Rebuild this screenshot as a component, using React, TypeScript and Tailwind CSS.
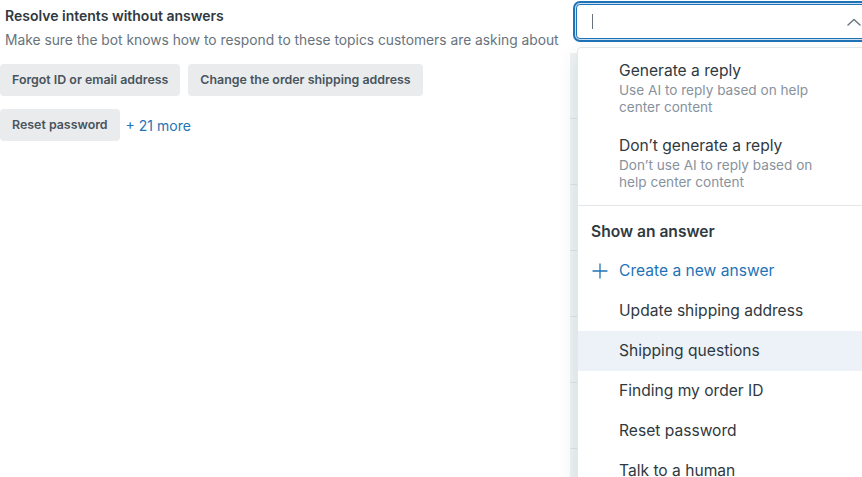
import React from 'react';

const chips = ['Forgot ID or email address', 'Change the order shipping address', 'Reset password'];

const answers = ['Update shipping address', 'Shipping questions', 'Finding my order ID', 'Reset password', 'Talk to a human'];

const ChevronUp = () => (
  <svg width="14" height="8" viewBox="0 0 14 8" fill="none" className="shrink-0">
    <path d="M1 7L7 1.5L13 7" stroke="#68737d" strokeWidth="1.4" strokeLinecap="round" strokeLinejoin="round" />
  </svg>
);

const PlusIcon = () => (
  <svg width="16" height="16" viewBox="0 0 16 16" fill="none" className="shrink-0">
    <path d="M8 1v14M1 8h14" stroke="#1f73b7" strokeWidth="1.3" strokeLinecap="round" />
  </svg>
);

export default function App() {
  return (
    <div className="flex w-[862px] h-[477px] overflow-hidden bg-white font-['Inter',sans-serif]">
      {/* Left: intents */}
      <div className="w-[570px] shrink-0">
        <div className="pl-[5px] pt-[6px] text-[14px] leading-[20px] font-semibold text-[#2f3941]">
          Resolve intents without answers
        </div>
        <div className="pl-[5px] pt-[4px] text-[13.8px] leading-[20px] text-[#68737d]">
          Make sure the bot knows how to respond to these topics customers are asking about
        </div>
        <div className="mt-[14px] flex flex-wrap items-center gap-x-[8px] gap-y-[13px] w-[440px]">
          {chips.map((c) => (
            <div
              key={c}
              className="h-[32px] px-[12px] flex items-center rounded-[4px] bg-[#e9ebed] text-[12.4px] font-semibold text-[#49545c]"
            >
              {c}
            </div>
          ))}
          <span className="ml-[-2px] text-[14px] text-[#1f73b7]">+ 21 more</span>
        </div>
      </div>

      {/* Right: answer picker */}
      <div className="relative flex-1 flex flex-col">
        <div className="ml-[6px] mt-[4px] h-[35px] w-[300px] shrink-0 flex items-center rounded-[4px] border border-[#1f73b7] shadow-[0_0_0_1px_#cfe0f0,0_0_0_3px_#1f73b7] pl-[15px]">
          <span className="w-[1px] h-[15px] bg-[#68737d]" />
          <span className="w-[254px]" />
          <ChevronUp />
        </div>

        {/* table rows behind the menu */}
        <div className="mt-[14px] flex-1 bg-[#eff2f3]">
          <div className="h-[66px] border-b border-[#dce1e4]" />
          <div className="h-[66px] border-b border-[#dce1e4]" />
          <div className="h-[66px] border-b border-[#dce1e4]" />
          <div className="h-[66px] border-b border-[#dce1e4]" />
          <div className="h-[66px] border-b border-[#dce1e4]" />
          <div className="h-[66px] border-b border-[#dce1e4]" />
        </div>

        {/* dropdown menu */}
        <div className="absolute left-[7px] top-[47px] w-[300px] h-[460px] bg-white border border-[#e3e7ea] rounded-[4px] shadow-[0_8px_20px_rgba(4,68,77,0.12)] overflow-hidden">
          <div className="pl-[41px] pt-[13px] pb-[8px]">
            <div className="text-[15.6px] leading-[20px] text-[#2f3941]">Generate a reply</div>
            <div className="mt-[1px] text-[13.6px] leading-[17px] text-[#87929d] w-[210px]">
              Use AI to reply based on help center content
            </div>
          </div>
          <div className="pl-[41px] pt-[12px] pb-[14px]">
            <div className="text-[15.6px] leading-[20px] text-[#2f3941]">Don’t generate a reply</div>
            <div className="mt-[1px] text-[13.6px] leading-[17px] text-[#87929d] w-[210px]">
              Don’t use AI to reply based on help center content
            </div>
          </div>
          <div className="border-t border-[#e3e7ea]" />
          <div className="pl-[13px] pt-[16px] pb-[9px] text-[15.6px] leading-[20px] font-semibold text-[#2f3941]">
            Show an answer
          </div>
          <div className="h-[40px] flex items-center pl-[14px] gap-[11px] text-[15.6px] text-[#1f73b7]">
            <PlusIcon />
            <span>Create a new answer</span>
          </div>
          {answers.map((a) => (
            <div
              key={a}
              className={`h-[40px] flex items-center pl-[41px] text-[15.6px] text-[#2f3941] ${
                a === 'Shipping questions' ? 'bg-[#edf2f9]' : ''
              }`}
            >
              {a}
            </div>
          ))}
        </div>
      </div>
    </div>
  );
}
